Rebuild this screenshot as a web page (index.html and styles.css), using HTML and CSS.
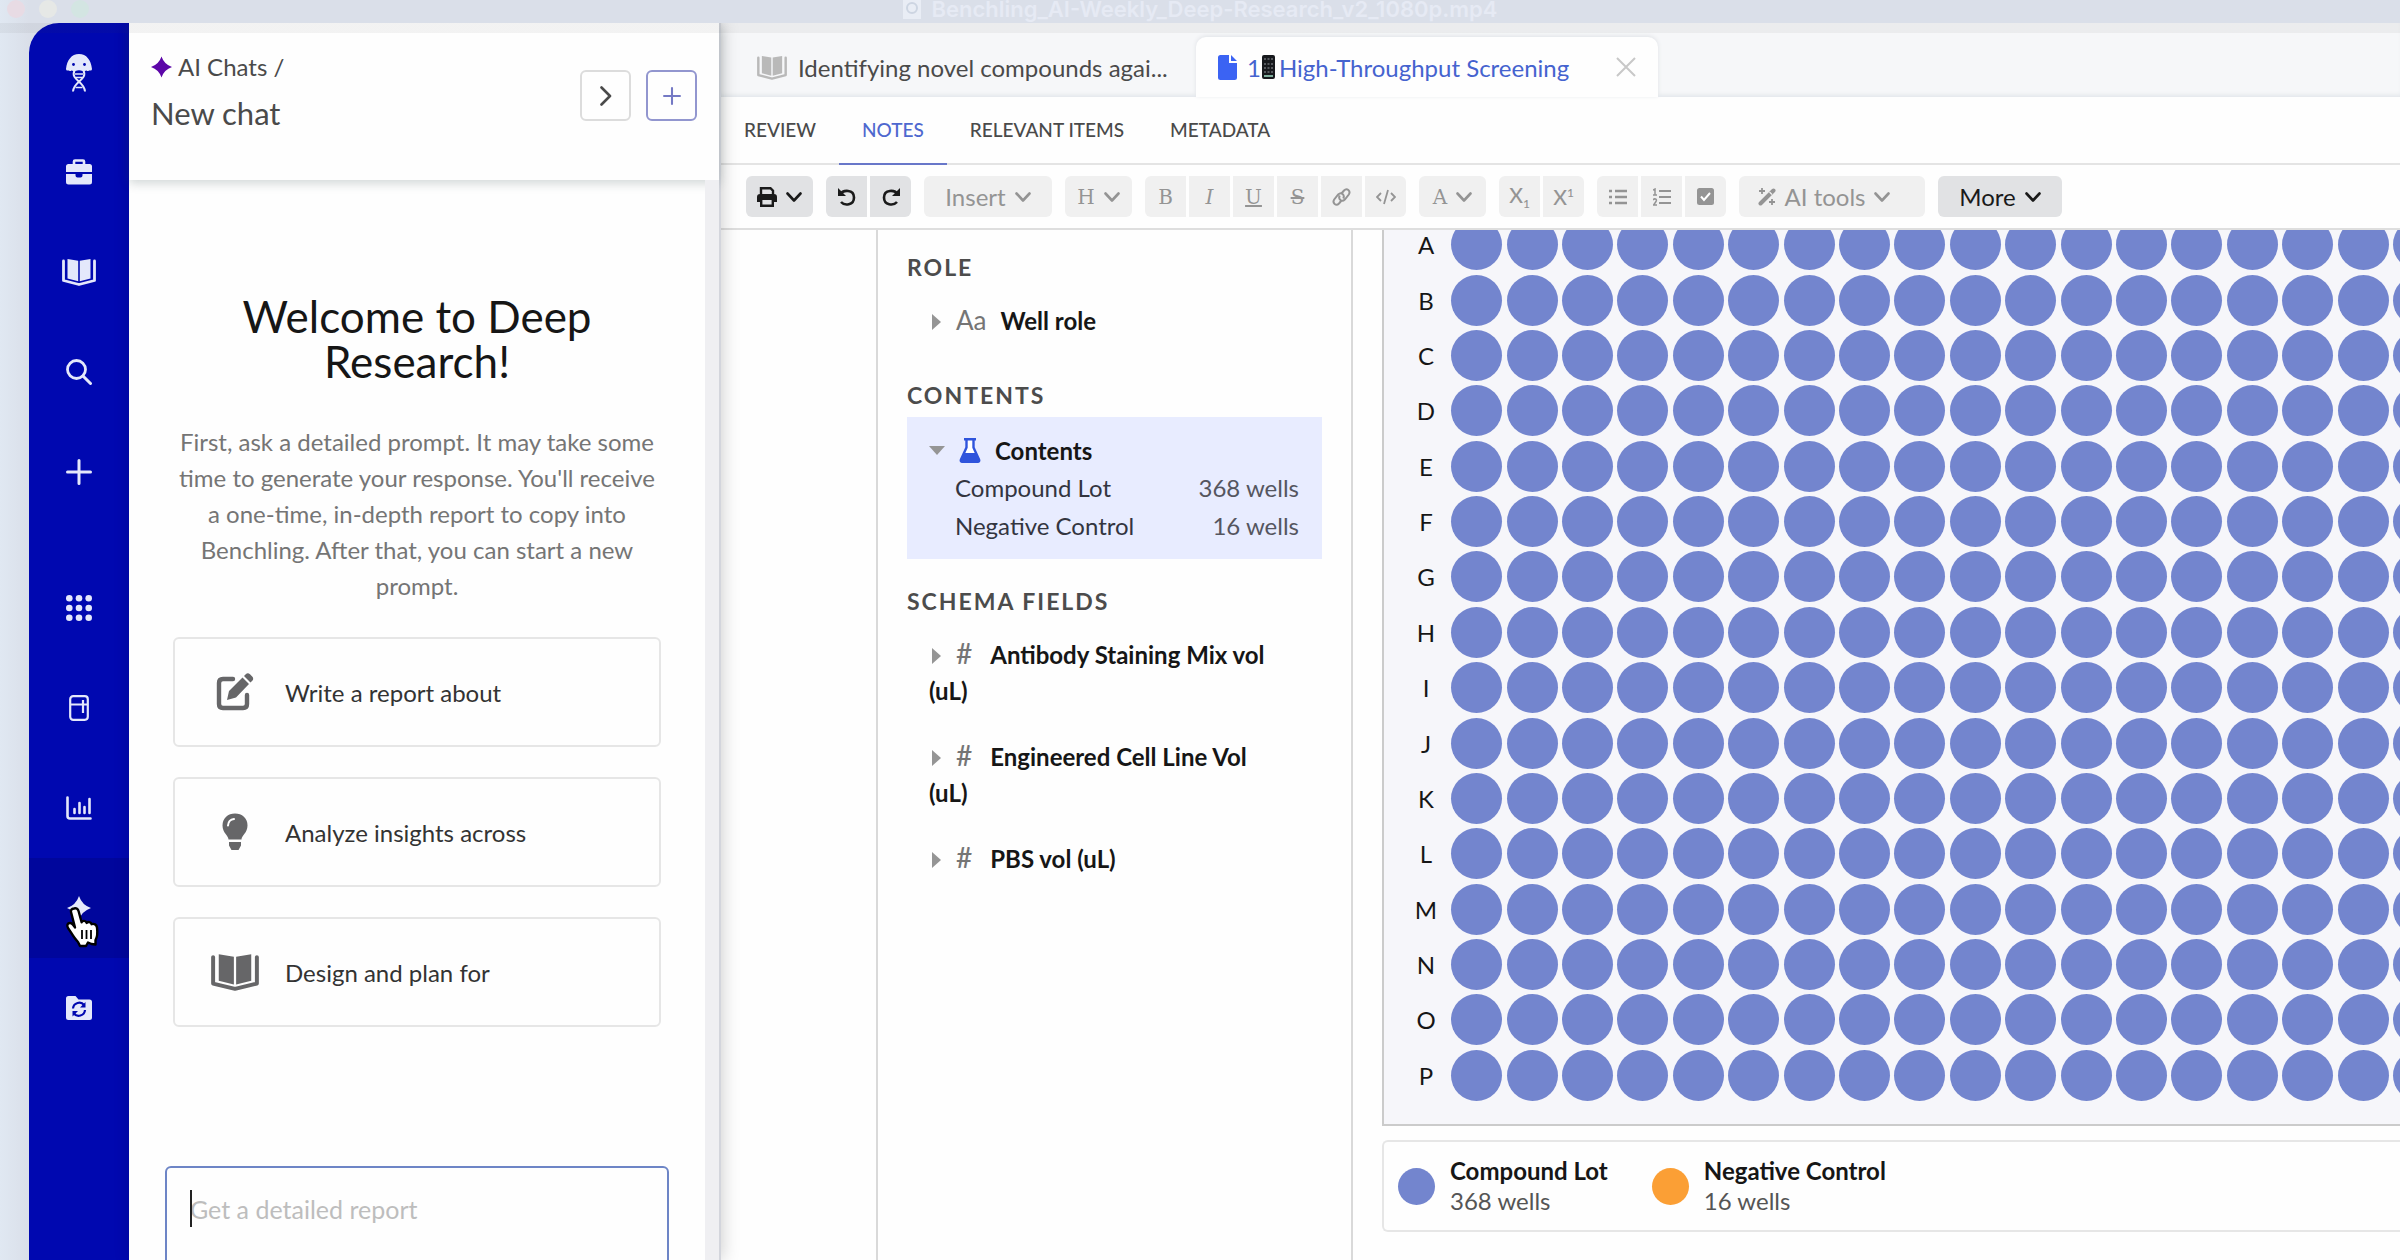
FILE: index.html
```html
<!DOCTYPE html>
<html lang="en">
<head>
    <meta charset="UTF-8">
    <meta name="viewport" content="width=device-width, initial-scale=1.0">
    <title>High-Throughput Screening</title>
    <link rel="stylesheet" href="styles.css">
</head>
<body>

    <svg class="defs" aria-hidden="true">
        <symbol id="book" viewBox="0 0 34 28" preserveAspectRatio="none">
            <path d="M1.500 3v19.500L17 26.500l15.500-4V3" fill="none" stroke="currentColor" stroke-width="2.800" stroke-linejoin="round" stroke-linecap="round"/>
            <path d="M5.500 1l10.700 1.800v20.400L5.500 20.400zM28.500 1L17.800 2.800v20.400l10.700-2.800z" fill="currentColor"/>
        </symbol>
        <symbol id="sparkle" viewBox="0 0 24 24">
            <path d="M12 0q3 9 12 12-9 3-12 12-3-9-12-12 9-3 12-12z" fill="currentColor"/>
        </symbol>
        <symbol id="plus" viewBox="0 0 26 26">
            <path d="M13 1.500v23M1.500 13h23" fill="none" stroke="currentColor" stroke-width="3" stroke-linecap="round"/>
        </symbol>
        <symbol id="chevron" viewBox="0 0 16 10">
            <path d="M1.500 1.500L8 8.500l6.500-7" fill="none" stroke="currentColor" stroke-width="2.600" stroke-linecap="round" stroke-linejoin="round"/>
        </symbol>
    </svg>

    <header class="titlebar">
        <div class="lights"><i class="red"></i><i class="yellow"></i><i class="green"></i></div>
        <svg width="18" height="20" viewBox="0 0 18 20"><path d="M0 0h18v20H0z" fill="#e9edf5"/><circle cx="9" cy="9" r="5" fill="none" stroke="#cdd5e2" stroke-width="2"/></svg>
        <span>Benchling_AI-Weekly_Deep-Research_v2_1080p.mp4</span>
    </header>

    <div class="app">
        <nav class="rail">
            <a href="#" class="rail-item" aria-label="Home">
                <svg width="28" height="38" viewBox="0 0 28 38">
                    <path d="M1 15C2 6 6.500 0 14 0s12 6 13 15q0 1.500-1.500 1.500H24q-1 1-2.500 0-2.500 1-4 .5-3.500-1.500-7 0-1.500.5-4-.5-1.500 1-2.500 0H2.500Q1 16.500 1 15z" fill="currentColor"/>
                    <circle cx="8.500" cy="10.500" r="1.400" fill="#0008b0"/><circle cx="19.500" cy="10.500" r="1.400" fill="#0008b0"/>
                    <path d="M9.500 16.500C5 26 19.500 27 20 37.500M18.500 16.500C23 26 8.500 27 8 37.500" fill="none" stroke="currentColor" stroke-width="2"/>
                    <path d="M10 20h8M10.500 23.500h7M10.500 33.500h7" stroke="currentColor" stroke-width="1.600"/>
                </svg>
            </a>
            <a href="#" class="rail-item" aria-label="Projects">
                <svg width="26" height="26" viewBox="0 0 26 26">
                    <path d="M8 6V2.500Q8 1.500 9 1.500h8q1 0 1 1V6" fill="none" stroke="currentColor" stroke-width="2.600"/>
                    <path d="M2.500 5h21Q26 5 26 7.500V13H0V7.500Q0 5 2.500 5zM0 15h9.500v1.500q0 2 2 2h3q2 0 2-2V15H26v8q0 2.500-2.500 2.500h-21Q0 25.500 0 23z" fill="currentColor"/>
                </svg>
            </a>
            <a href="#" class="rail-item" aria-label="Notebook"><svg width="34" height="28"><use href="#book"/></svg></a>
            <a href="#" class="rail-item" aria-label="Search">
                <svg width="26" height="26" viewBox="0 0 26 26"><circle cx="10.500" cy="10.500" r="9" fill="none" stroke="currentColor" stroke-width="2.800"/><path d="M17 17l7.500 7.500" stroke="currentColor" stroke-width="3" stroke-linecap="round"/></svg>
            </a>
            <a href="#" class="rail-item" aria-label="Create"><svg width="26" height="26"><use href="#plus"/></svg></a>
            <div class="rail-gap"></div>
            <a href="#" class="rail-item" aria-label="Apps">
                <svg width="26" height="26" viewBox="0 0 26 26" fill="currentColor"><circle cx="3.300" cy="3.300" r="3.300"/><circle cx="13" cy="3.300" r="3.300"/><circle cx="22.700" cy="3.300" r="3.300"/><circle cx="3.300" cy="13" r="3.300"/><circle cx="13" cy="13" r="3.300"/><circle cx="22.700" cy="13" r="3.300"/><circle cx="3.300" cy="22.700" r="3.300"/><circle cx="13" cy="22.700" r="3.300"/><circle cx="22.700" cy="22.700" r="3.300"/></svg>
            </a>
            <a href="#" class="rail-item" aria-label="Inventory">
                <svg width="20" height="26" viewBox="0 0 20 26" fill="none" stroke="currentColor" stroke-width="2.200"><rect x="1.200" y="1.200" width="17.600" height="23.600" rx="3"/><path d="M1 9.500h18M14 5v13"/></svg>
            </a>
            <a href="#" class="rail-item" aria-label="Insights">
                <svg width="26" height="24" viewBox="0 0 26 24" fill="none" stroke="currentColor" stroke-width="2.600" stroke-linecap="round"><path d="M1.500 1.500V20q0 2.500 2.500 2.500h20.500M8.500 13v4M13.500 7v10M18.500 11v6M23.500 3v14"/></svg>
            </a>
            <a href="#" class="rail-item active" aria-label="AI chats">
                <svg width="24" height="24"><use href="#sparkle"/></svg>
                <svg class="cursor" width="36" height="42" viewBox="0 0 36 42">
                    <path d="M9 2.500c2.500-.7 4 .5 4.600 2.800l3 11c1-2 4-2 5 .6 1.500-1.600 4.400-1 5 1.300 2.500-1 5 .4 5.400 3.300.8 6 .6 9-1.500 12.500v4.500l-4-.5-3.500-1.500-2 3.500h-6l-2-4C8.500 31.500 6 26 3 22c-1.500-2.500-.5-5 2-5 1.600 0 3.500 2 5 4.500L6 6c-.5-2 .8-3 3-3.500z" fill="#fff" stroke="#000" stroke-width="2.400" stroke-linejoin="round"/>
                    <path d="M17 24v9M21.500 24v9M26 24v9" stroke="#000" stroke-width="1.800"/>
                </svg>
            </a>
            <a href="#" class="rail-item" aria-label="Sync">
                <svg width="26" height="24" viewBox="0 0 26 24"><path d="M2.500 0h7l3 3.500h11Q26 3.500 26 6v15.500q0 2.500-2.500 2.500h-21Q0 24 0 21.500v-19Q0 0 2.500 0z" fill="currentColor"/><path d="M7 12.500c.5-6 8-7.500 11-3.500M19 14c-.5 6-8 7.500-11 3.500" fill="none" stroke="#0008b0" stroke-width="2.200"/><path d="M19.500 6v5.500H14zM6.500 20.500V15H12z" fill="#0008b0"/></svg>
            </a>
        </nav>

        <aside class="chat">
            <header class="chat-header">
                <div>
                    <a href="#" class="crumb"><svg width="21" height="22"><use href="#sparkle"/></svg>AI Chats /</a>
                    <h2>New chat</h2>
                </div>
                <div class="chat-actions">
                    <button type="button" aria-label="Collapse"><svg width="12" height="20" viewBox="0 0 12 20"><path d="M1.500 1.500L10 10l-8.500 8.500" fill="none" stroke="currentColor" stroke-width="2.600" stroke-linecap="round" stroke-linejoin="round"/></svg></button>
                    <button type="button" class="new" aria-label="New chat"><svg width="18" height="18"><use href="#plus"/></svg></button>
                </div>
            </header>

            <div class="chat-body">
                <h1>Welcome to Deep Research!</h1>
                <p>First, ask a detailed prompt. It may take some time to generate your response. You'll receive a one-time, in-depth report to copy into Benchling. After that, you can start a new prompt.</p>

                <button type="button" class="prompt">
                    <svg width="38" height="38" viewBox="0 0 38 38"><path d="M17 6H7Q3 6 3 10v21q0 4 4 4h20q4 0 4-4v-9" fill="none" stroke="currentColor" stroke-width="4.400" stroke-linecap="round"/><path d="M11 27l2-9L26.500 4.500l6.500 6.500L20 24.500zM28 3l2-2q2-1.500 4 .3l2.200 2.200q1.800 2 .3 4l-2 2z" fill="currentColor"/></svg>
                    Write a report about
                </button>
                <button type="button" class="prompt">
                    <svg width="38" height="38" viewBox="0 0 38 38"><path d="M12.500 26.500c0-4-6-6.500-6-14C6.500 5 12 .5 19 .5S31.500 5 31.500 12.500c0 7.500-6 10-6 14zM13 29h12v3.500L22.500 37h-7L13 32.500z" fill="currentColor"/><path d="M12 12.500q.5-6 6-6.500" fill="none" stroke="#fff" stroke-width="2" stroke-linecap="round"/></svg>
                    Analyze insights across
                </button>
                <button type="button" class="prompt">
                    <svg width="48" height="38"><use href="#book"/></svg>
                    Design and plan for
                </button>

                <div class="composer">
                    <textarea aria-label="Chat prompt" placeholder="Get a detailed report"></textarea>
                    <span class="caret"></span>
                </div>
            </div>
        </aside>

        <main class="main">
            <div class="doc-tabs">
                <a href="#" class="doc-tab"><svg width="30" height="25"><use href="#book"/></svg><span>Identifying novel compounds agai...</span></a>
                <div class="doc-tab current">
                    <a href="#">
                        <svg width="19" height="25" viewBox="0 0 19 25"><path d="M2.500 0H11v8h8v14.500q0 2.500-2.500 2.500h-14Q0 25 0 22.500v-20Q0 0 2.500 0zM13 0l6 6h-6z" fill="#3b63f3"/></svg>
                        <span>1</span>
                        <svg class="phone" width="13" height="24" viewBox="0 0 13 24"><rect width="13" height="24" rx="2" fill="#17191d"/><path d="M2 4h9M2 9h9M2 13h9M2 17h9" stroke="#6c6f74" stroke-width="1.500" stroke-dasharray="2 1.500"/><path d="M2 21h9" stroke="#7fae9c" stroke-width="2"/></svg>
                        <span>High-Throughput Screening</span>
                    </a>
                    <button type="button" aria-label="Close tab"><svg width="20" height="20" viewBox="0 0 20 20"><path d="M1 1l18 18M19 1L1 19" stroke="currentColor" stroke-width="2"/></svg></button>
                </div>
            </div>

            <nav class="sections">
                <a href="#">REVIEW</a>
                <a href="#" class="selected">NOTES</a>
                <a href="#">RELEVANT ITEMS</a>
                <a href="#">METADATA</a>
            </nav>

            <div class="toolbar">
                <div class="group on">
                    <button type="button" class="wide" aria-label="Print"><svg width="20" height="20" viewBox="0 0 20 20"><path d="M4 7V1.200h9.500L16 3.700V7" fill="none" stroke="currentColor" stroke-width="2.400"/><path d="M3 7h14q3 0 3 3v5h-3v-2H3v2H0v-5q0-3 3-3z" fill="currentColor"/><path d="M4.200 13v5.800h11.600V13" fill="none" stroke="currentColor" stroke-width="2.400"/></svg><svg width="16" height="10"><use href="#chevron"/></svg></button>
                </div>
                <div class="group on">
                    <button type="button" aria-label="Undo"><svg width="18" height="18" viewBox="0 0 18 18"><path d="M2 6.500C5 1.500 16 1 16 9.500c0 8-9.500 8.500-13 4.500" fill="none" stroke="currentColor" stroke-width="2.600"/><path d="M0 0v8h8z" fill="currentColor"/></svg></button>
                    <button type="button" aria-label="Redo"><svg width="18" height="18" viewBox="0 0 18 18"><path d="M16 6.500C13 1.500 2 1 2 9.500c0 8 9.500 8.500 13 4.500" fill="none" stroke="currentColor" stroke-width="2.600"/><path d="M18 0v8h-8z" fill="currentColor"/></svg></button>
                </div>
                <div class="group">
                    <button type="button" class="insert">Insert<svg width="16" height="10"><use href="#chevron"/></svg></button>
                </div>
                <div class="group">
                    <button type="button" class="wide serif">H<svg width="16" height="10"><use href="#chevron"/></svg></button>
                </div>
                <div class="group">
                    <button type="button" class="serif">B</button>
                    <button type="button" class="serif italic">I</button>
                    <button type="button" class="serif underline">U</button>
                    <button type="button" class="serif strike">S</button>
                    <button type="button" aria-label="Link"><svg width="19" height="18" viewBox="0 0 19 18"><path d="M9.500 12.500l-2.500 3c-3 3-7-.5-4.800-4l4-5c3-3 7 .5 5 4M9.500 5.500l2.500-3c3-3 7 .5 4.800 4l-4 5c-3 3-7-.5-5-4" fill="none" stroke="currentColor" stroke-width="2"/></svg></button>
                    <button type="button" aria-label="Code"><svg width="20" height="16" viewBox="0 0 20 16"><path d="M5 4L1 8l4 4M15 4l4 4-4 4M12 1L8 15" fill="none" stroke="currentColor" stroke-width="1.800"/></svg></button>
                </div>
                <div class="group">
                    <button type="button" class="wide serif">A<svg width="16" height="10"><use href="#chevron"/></svg></button>
                </div>
                <div class="group">
                    <button type="button" class="script">X<sub>1</sub></button>
                    <button type="button" class="script">X<sup>1</sup></button>
                </div>
                <div class="group">
                    <button type="button" aria-label="Bulleted list"><svg width="18" height="16" viewBox="0 0 18 16"><path d="M0 2h3M0 8h3M0 14h3M6 2h12M6 8h12M6 14h12" stroke="currentColor" stroke-width="2.400"/></svg></button>
                    <button type="button" aria-label="Numbered list"><svg width="18" height="18" viewBox="0 0 18 18"><path d="M6 3h12M6 9h12M6 15h12" stroke="currentColor" stroke-width="2.200"/><path d="M0 2l2-1v6M0 7h4M0 12q1-1.500 2.500-1T3 13.500L.5 17H4" fill="none" stroke="currentColor" stroke-width="1.500"/></svg></button>
                    <button type="button" aria-label="Checklist"><svg width="17" height="17" viewBox="0 0 17 17"><rect width="17" height="17" rx="2.500" fill="currentColor"/><path d="M4 8.500l3 3.500 6-7" fill="none" stroke="#fff" stroke-width="2"/></svg></button>
                </div>
                <div class="group">
                    <button type="button" class="ai"><svg width="18" height="18" viewBox="0 0 18 18"><path d="M2.500 15.500L15.500 2.500" stroke="currentColor" stroke-width="4" stroke-linecap="round"/><path d="M4 0v6M1 3h6M14 11v6M11 14h6" stroke="currentColor" stroke-width="1.800"/><path d="M11.500 4L14 6.500" stroke="#f0f0f0" stroke-width="1.300"/></svg>AI tools<svg width="16" height="10"><use href="#chevron"/></svg></button>
                </div>
                <div class="group on">
                    <button type="button" class="more">More<svg width="16" height="10"><use href="#chevron"/></svg></button>
                </div>
            </div>

            <div class="workspace">
                <section class="fields">
                    <h3>ROLE</h3>
                    <div class="field"><i class="arrow"></i><span class="type">Aa</span><b>Well role</b></div>

                    <h3>CONTENTS</h3>
                    <div class="contents">
                        <div class="contents-title">
                            <i class="arrow down"></i>
                            <svg width="22" height="25" viewBox="0 0 22 25"><path d="M5 1.200h12M7.500 1v8.500L2 21.500q-.8 2 1 2.300h16q1.800-.3 1-2.300L14.500 9.500V1" fill="#fff" stroke="#2f54dc" stroke-width="2.400"/><path d="M5.500 15h11l4 9H1.500z" fill="#2f54dc"/></svg>
                            <b>Contents</b>
                        </div>
                        <dl>
                            <dt>Compound Lot</dt><dd>368 wells</dd>
                            <dt>Negative Control</dt><dd>16 wells</dd>
                        </dl>
                    </div>

                    <h3>SCHEMA FIELDS</h3>
                    <div class="field"><i class="arrow"></i><span class="type hash">#</span><b>Antibody Staining Mix vol (uL)</b></div>
                    <div class="field"><i class="arrow"></i><span class="type hash">#</span><b>Engineered Cell Line Vol (uL)</b></div>
                    <div class="field"><i class="arrow"></i><span class="type hash">#</span><b>PBS vol (uL)</b></div>
                </section>

                <section class="plate-area">
                    <div class="plate">
                        <table id="plate"></table>
                    </div>
                    <div class="legend">
                        <div class="legend-item"><i class="dot"></i><div><b>Compound Lot</b><span>368 wells</span></div></div>
                        <div class="legend-item"><i class="dot control"></i><div><b>Negative Control</b><span>16 wells</span></div></div>
                    </div>
                </section>
            </div>
        </main>
    </div>

    <script>
        // 384 well plate: 16 rows x 24 columns, controls in the last column
        const plate = document.getElementById('plate');

        for (const letter of 'ABCDEFGHIJKLMNOP') {
            const row = plate.insertRow();
            row.innerHTML = `<th scope="row">${letter}</th>`;
            for (let col = 1; col <= 24; col++) {
                row.insertCell().innerHTML = `<i class="well${col === 24 ? ' control' : ''}"></i>`;
            }
        }
    </script>

</body>
</html>
```

FILE: styles.css
```css
* {
    box-sizing: border-box;
}
body {
    margin: 0;
    height: 100vh;
    padding: 23px 0 0 29px;
    overflow: hidden;
    position: relative;
    font-family: Lato, "Open Sans", sans-serif;
    font-size: 24px;
    color: #333;
    background: linear-gradient(90deg, #e0e8f2 0, #dadfe9 29px);
}
h1, h2, h3, p, dl, dd {
    margin: 0;
}
a {
    color: inherit;
    text-decoration: none;
}
button {
    font: inherit;
    color: inherit;
    border: none;
    background: none;
    padding: 0;
    cursor: pointer;
}
svg {
    flex: none;
    display: block;
}
.defs {
    position: absolute;
    width: 0;
    height: 0;
}

/* window title, its lower edge lies translucent over the top of the app */
.titlebar {
    position: absolute;
    top: 0;
    left: 0;
    right: 0;
    height: 33px;
    padding-bottom: 16px;
    display: flex;
    align-items: center;
    justify-content: center;
    gap: 11px;
    z-index: 2;
    background: linear-gradient(transparent 23px, rgba(60, 60, 60, 0.06) 23px);
    font-family: Inter, sans-serif;
    font-size: 22px;
    font-weight: 600;
    color: #e6eaf4;
}
.lights {
    position: absolute;
    left: 7px;
    top: 0;
    display: flex;
    gap: 14px;
}
.lights i {
    width: 18px;
    height: 18px;
    border-radius: 50%;
}
.red { background: #e8dbe4; }
.yellow { background: #e6e8e6; }
.green { background: #d3e5e2; }

.app {
    display: flex;
    height: 100%;
    border-top-left-radius: 30px;
    overflow: hidden;
    background: #fefefe;
}

/* left rail */
.rail {
    flex: none;
    width: 100px;
    background: #0008b0;
    color: #e4e8fb;
}
.rail-item {
    height: 100px;
    display: flex;
    align-items: center;
    justify-content: center;
    position: relative;
}
.rail-item:first-child {
    height: 99px;
}
.rail-item.active {
    background: #00069c;
}
.rail-gap {
    height: 36px;
}
.cursor {
    position: absolute;
    left: 36px;
    top: 48px;
}

/* chat panel */
.chat {
    flex: none;
    width: 592px;
    display: flex;
    flex-direction: column;
    border-right: 2px solid #d3d5dc;
    box-shadow: 2px 0 16px rgba(0, 0, 0, 0.18);
    position: relative;
    z-index: 1;
    background: #fefefe;
}
.chat-header {
    flex: none;
    height: 157px;
    padding: 29px 22px 0;
    display: flex;
    justify-content: space-between;
    box-shadow: 0 3px 10px rgba(40, 70, 70, 0.22);
    color: #4a4a4a;
}
.crumb {
    display: flex;
    align-items: center;
    gap: 6px;
    line-height: 30px;
}
.chat-header h2 {
    margin-top: 13px;
    font-size: 31px;
    font-weight: 400;
    line-height: 36px;
}
.chat-actions {
    display: flex;
    gap: 15px;
    padding-top: 18px;
}
.chat-actions button {
    width: 51px;
    height: 51px;
    display: grid;
    place-items: center;
    border: 2px solid #dcdcdc;
    border-radius: 6px;
}
.chat-actions .new {
    border-color: #9296cf;
    color: #7479c4;
}
.crumb svg {
    color: #5c06a8;
}
.chat-body {
    flex: 1;
    min-height: 0;
    overflow: hidden;
    border-right: 14px solid #efeff2;
    padding: 114px 44px 0;
    display: flex;
    flex-direction: column;
}
.chat-body h1 {
    font-size: 44px;
    font-weight: 400;
    line-height: 45px;
    text-align: center;
    color: #161616;
    padding: 0 50px;
}
.chat-body p {
    margin: 40px 0 33px;
    line-height: 36px;
    text-align: center;
    color: #757575;
}
.prompt {
    flex: none;
    height: 110px;
    margin-bottom: 30px;
    padding: 0 36px;
    display: flex;
    align-items: center;
    border: 2px solid #e6e6e6;
    border-radius: 6px;
}
.prompt svg {
    width: 48px;
    margin-right: 26px;
    color: #666668;
}
.composer {
    position: relative;
    margin: 109px -8px 0;
}
.composer textarea {
    display: block;
    width: 100%;
    height: 140px;
    padding: 23px;
    border: 2px solid #6d85c6;
    border-radius: 6px;
    resize: none;
    font: inherit;
    font-size: 25px;
    line-height: 36px;
    background: none;
}
.composer textarea::placeholder {
    color: #bdbdbd;
}
.caret {
    position: absolute;
    left: 25px;
    top: 24px;
    width: 2px;
    height: 37px;
    background: #222;
}

/* document area */
.main {
    flex: 1;
    min-width: 0;
    display: flex;
    flex-direction: column;
}
.doc-tabs {
    flex: none;
    height: 74px;
    padding: 14px 0 0 36px;
    display: flex;
    background: #f6f7f9;
    box-shadow: inset 0 -4px 4px -2px #e2e6ea;
}
.doc-tab {
    width: 439px;
    display: flex;
    align-items: center;
    gap: 11px;
    color: #4a4a4a;
}
.doc-tab > svg {
    color: #b9b9b9;
}
.doc-tab.current {
    width: 462px;
    justify-content: space-between;
    padding: 0 22px;
    border-radius: 10px 10px 0 0;
    background: #fefefe;
    box-shadow: 0 -1px 4px #dfe2e6;
    color: #4563cf;
}
.doc-tab.current a {
    display: flex;
    align-items: center;
    gap: 10px;
}
.doc-tab .phone {
    margin: 0 -6px 0 -9px;
}
.doc-tab button {
    color: #c8c8c8;
}
.sections {
    flex: none;
    display: flex;
    height: 68px;
    border-bottom: 2px solid #e4e4e4;
    font-size: 19px;
    font-weight: 500;
    color: #4a4a4a;
}
.sections a {
    height: 68px;
    padding: 0 23px;
    line-height: 66px;
}
.sections .selected {
    color: #4e68cf;
    border-bottom: 2px solid #6877c9;
}
.toolbar {
    flex: none;
    display: flex;
    gap: 13px;
    height: 65px;
    padding: 11px 25px 0;
    border-bottom: 2px solid #dedede;
    color: #949494;
}
.group {
    display: flex;
    gap: 3px;
    border-radius: 6px;
    overflow: hidden;
    height: 41px;
}
.group button {
    width: 41px;
    display: flex;
    align-items: center;
    justify-content: center;
    gap: 9px;
    background: #f0f0f0;
}
.group.on button {
    background: #e1e2e4;
    color: #1a1a1a;
}
.group .wide { width: 67px; }
.group .insert { width: 128px; }
.group .ai { width: 186px; padding-right: 16px; }
.group .more { width: 124px; }
.toolbar .serif {
    font-family: "DejaVu Serif", serif;
    font-size: 20px;
}
.toolbar .italic { font-style: italic; }
.toolbar .underline { text-decoration: underline; }
.toolbar .strike { text-decoration: line-through; }
.toolbar .script {
    display: block;
    font-size: 21px;
    font-weight: 500;
}
.script sub, .script sup {
    font-size: 12px;
}

.workspace {
    flex: 1;
    min-height: 0;
    display: flex;
    gap: 29px;
    padding-left: 155px;
    overflow: hidden;
}
.fields {
    flex: none;
    width: 477px;
    padding: 19px 29px 0;
    border: solid #d9d9d9;
    border-width: 0 2px;
    color: #161616;
}
.fields h3 {
    font-size: 23px;
    line-height: 36px;
    letter-spacing: 2px;
    color: #4c4c4c;
}
.field {
    margin: 18px 0 30px;
    padding: 0 48px 0 22px;
    line-height: 36px;
}
.field + h3 {
    margin-top: 38px;
}
.arrow {
    display: inline-block;
    margin: 0 15px 0 3px;
    border: solid transparent;
    border-width: 8px 0 8px 9px;
    border-left-color: #959595;
}
.arrow.down {
    margin: 0;
    border-width: 9px 8px 0;
    border-color: #959595 transparent;
}
.type {
    margin-right: 14px;
    font-size: 26px;
    line-height: 30px;
    color: #757575;
}
.hash {
    margin-right: 18px;
    font-size: 28px;
    font-weight: 500;
}
.contents {
    margin: 4px 0 24px;
    padding: 14px 23px 14px 22px;
    background: #e8ecff;
}
.contents-title {
    display: flex;
    align-items: center;
    gap: 14px;
    height: 38px;
}
.contents dl {
    display: grid;
    grid-template-columns: 1fr auto;
    padding-left: 26px;
    line-height: 38px;
    color: #33353f;
}
.contents dd {
    text-align: right;
    color: #55565f;
}
.plate-area {
    flex: 1;
    min-width: 0;
}
.plate {
    margin-top: -15px;
    padding: 0 0 21px 19px;
    overflow: hidden;
    border: 2px solid #cbcbcb;
    border-right: none;
    background: #f6f6fa;
}
.plate table {
    width: 1376px;
    height: 886px;
    table-layout: fixed;
    border-collapse: collapse;
}
.plate th {
    width: 46px;
    padding: 0;
    font-weight: 400;
    color: #161616;
}
.plate td {
    padding: 0;
}
.well, .dot {
    display: block;
    width: 51px;
    height: 51px;
    margin: auto;
    border-radius: 50%;
    background: #7385ce;
}
.well.control, .dot.control {
    background: #fb9f35;
}
.legend {
    margin-top: 14px;
    height: 92px;
    padding-left: 14px;
    display: flex;
    align-items: center;
    gap: 44px;
    border: 2px solid #e6e6e6;
    border-right: none;
    border-radius: 6px 0 0 6px;
}
.legend-item {
    display: flex;
    align-items: center;
    gap: 15px;
    line-height: 30px;
}
.legend .dot {
    width: 37px;
    height: 37px;
}
.legend b, .legend span {
    display: block;
}
.legend b {
    color: #161616;
}
.legend span {
    color: #555;
}
```
